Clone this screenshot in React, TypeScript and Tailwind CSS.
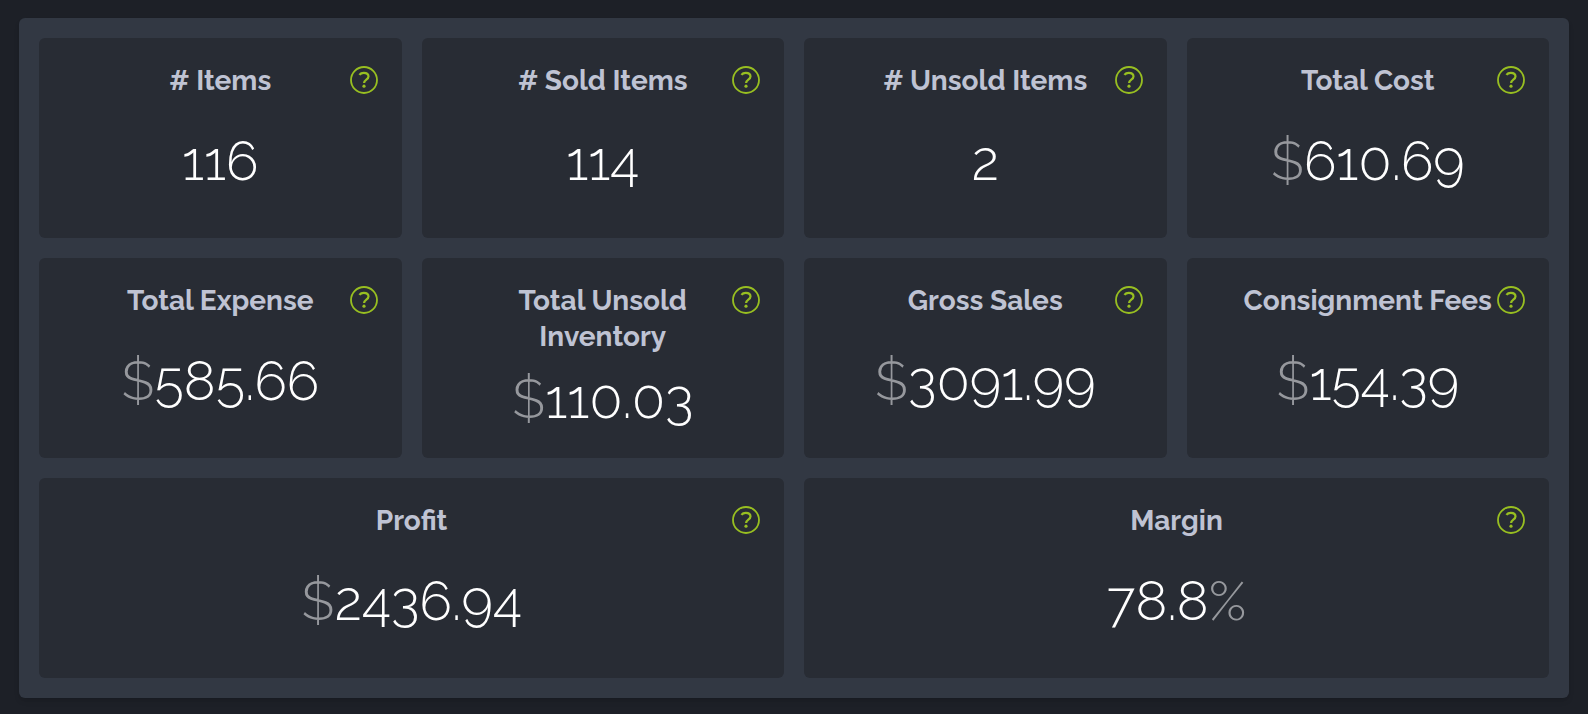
type Stat = {
  title: string;
  value: string;
  prefix?: string;
  suffix?: string;
  wide?: boolean;
};

const stats: Stat[] = [
  { title: "# Items", value: "116" },
  { title: "# Sold Items", value: "114" },
  { title: "# Unsold Items", value: "2" },
  { title: "Total Cost", value: "610.69", prefix: "$" },
  { title: "Total Expense", value: "585.66", prefix: "$" },
  { title: "Total Unsold Inventory", value: "110.03", prefix: "$" },
  { title: "Gross Sales", value: "3091.99", prefix: "$" },
  { title: "Consignment Fees", value: "154.39", prefix: "$" },
  { title: "Profit", value: "2436.94", prefix: "$", wide: true },
  { title: "Margin", value: "78.8", suffix: "%", wide: true },
];

function HelpIcon() {
  return (
    <svg className="h-7 w-7" viewBox="0 0 28 28" fill="none" stroke="currentColor" aria-hidden="true">
      <circle cx="14" cy="14" r="13" strokeWidth="1.8" />
      <path d="M9.4 8.8c1-1.3 2.4-2 4.4-2 2.8 0 4.7 1.4 4.7 3.6 0 3.2-4.4 3.2-4.4 6.6" strokeWidth="2.2" />
      <circle cx="14" cy="20.2" r="1.6" fill="currentColor" stroke="none" />
    </svg>
  );
}

function StatCard({ title, value, prefix, suffix, wide }: Stat) {
  return (
    <article
      className={`relative flex min-h-[200px] flex-col rounded-md bg-[#282c34] px-12 pt-[25px] pb-[15px] text-center ${
        wide ? "col-span-2" : ""
      }`}
    >
      <h2 className="text-[28px] leading-9 font-bold text-[#bfc3d3]">{title}</h2>
      <button
        type="button"
        aria-label={`About ${title}`}
        className="absolute top-7 right-6 cursor-pointer text-[#98bf21]"
      >
        <HelpIcon />
      </button>
      <p className="flex flex-1 items-center justify-center text-[54px] leading-none font-light text-white">
        {prefix && <span className="text-[#96989d]">{prefix}</span>}
        <span>{value}</span>
        {suffix && <span className="text-[#96989d]">{suffix}</span>}
      </p>
    </article>
  );
}

export default function App() {
  return (
    <main className="min-h-screen bg-[#1d2027] px-[19px] pt-[18px] pb-4 font-['Raleway','Lato',sans-serif]">
      <section className="grid grid-cols-4 gap-5 rounded-md bg-[#323843] p-5 shadow-md">
        {stats.map((stat) => (
          <StatCard key={stat.title} {...stat} />
        ))}
      </section>
    </main>
  );
}
